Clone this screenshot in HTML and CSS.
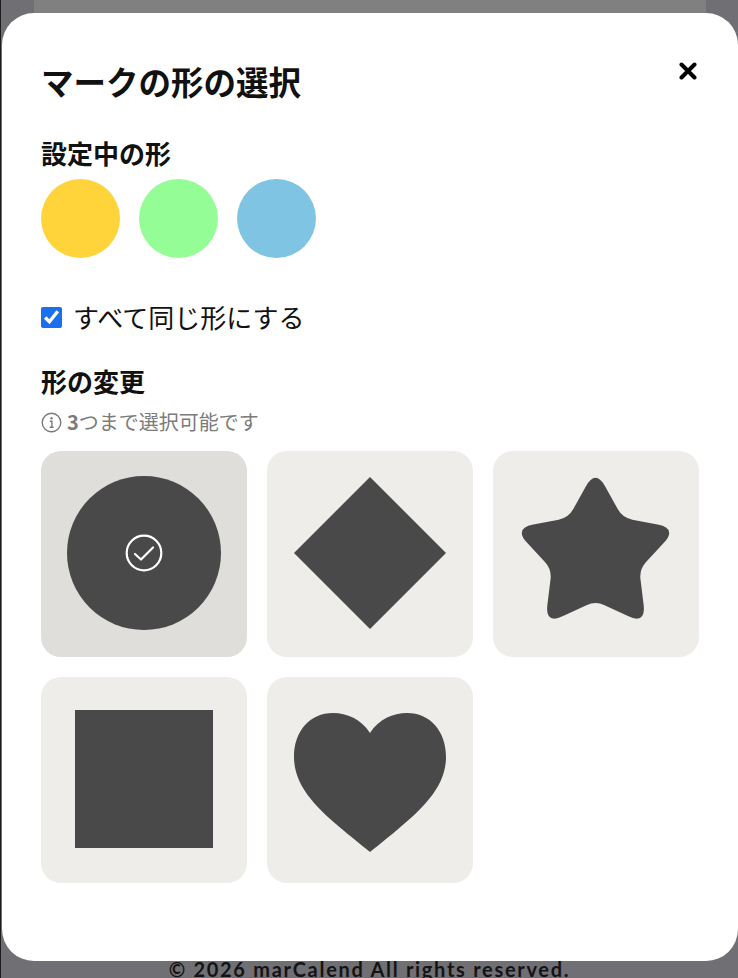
FILE: index.html
```html
<!DOCTYPE html>
<html lang="ja">
<head>
<meta charset="utf-8">
<title>マークの形の選択</title>
<link rel="stylesheet" href="styles.css">
</head>
<body>
<div class="screen">
  <div class="top-strip"><div class="behind"></div></div>
  <div class="modal">
    <div class="header">
      <h1 class="title">マークの形の選択</h1>
      <button class="close" aria-label="閉じる">
        <svg viewBox="0 0 18 18" width="18" height="18"><path d="M2.5 2.5 L15.5 15.5 M15.5 2.5 L2.5 15.5" stroke="#000" stroke-width="4" stroke-linecap="round"/></svg>
      </button>
    </div>

    <h2 class="section-title first">設定中の形</h2>
    <div class="current-shapes">
      <span class="dot dot-yellow"></span>
      <span class="dot dot-green"></span>
      <span class="dot dot-blue"></span>
    </div>

    <label class="same-row">
      <input type="checkbox" class="same-check" checked>
      <span class="same-label">すべて同じ形にする</span>
    </label>

    <h2 class="section-title second">形の変更</h2>
    <p class="info">
      <svg class="info-icon" viewBox="0 0 21 21" width="21" height="21"><circle cx="10.5" cy="10.5" r="9.3" fill="none" stroke="#7b7b7b" stroke-width="1.4"/><circle cx="10.5" cy="6.3" r="1.2" fill="#7b7b7b"/><path d="M8.8 9.2 H10.9 V15.2 M8.6 15.2 H12.6" fill="none" stroke="#7b7b7b" stroke-width="1.4"/></svg>
      <b class="info-num">3</b>つまで選択可能です
    </p>

    <div class="shape-grid">
      <button class="tile selected">
        <svg viewBox="0 0 206 206" width="206" height="206">
          <circle cx="103" cy="102" r="77" fill="#494949"/>
          <circle cx="103" cy="102" r="17.3" fill="none" stroke="#fff" stroke-width="2.2"/>
          <path d="M94 103 L100 108.5 L112 96.5" fill="none" stroke="#fff" stroke-width="2.2" stroke-linecap="round" stroke-linejoin="round"/>
        </svg>
      </button>
      <button class="tile">
        <svg viewBox="0 0 206 206" width="206" height="206">
          <polygon points="103,26 179,102 103,178 27,102" fill="#494949"/>
        </svg>
      </button>
      <button class="tile">
        <svg viewBox="0 0 206 206" width="206" height="206">
          <path d="M112.2 35.49 L124.69 58.04 Q129.54 66.79 139.36 68.7 L164.66 73.61 Q184.29 77.43 170.65 92.05 L153.07 110.9 Q146.25 118.21 147.47 128.14 L150.61 153.72 Q153.05 173.57 134.92 165.12 L111.56 154.23 Q102.5 150 93.44 154.23 L70.08 165.12 Q51.95 173.57 54.39 153.72 L57.53 128.14 Q58.75 118.21 51.93 110.9 L34.35 92.05 Q20.71 77.43 40.34 73.61 L65.64 68.7 Q75.46 66.79 80.31 58.04 L92.8 35.49 Q102.5 18 112.2 35.49 Z" fill="#494949"/>
        </svg>
      </button>
      <button class="tile">
        <svg viewBox="0 0 206 206" width="206" height="206">
          <rect x="34" y="33" width="138" height="138" fill="#494949"/>
        </svg>
      </button>
      <button class="tile">
        <svg viewBox="0 0 206 206" width="206" height="206">
          <path d="M103 56 C112 42 126 36 140 36 C163 36 179 54 179 80 C179 110 155 132 130 153 C118 163 108 171 103 175 C98 171 88 163 76 153 C51 132 27 110 27 80 C27 54 43 36 66 36 C80 36 94 42 103 56 Z" fill="#494949"/>
        </svg>
      </button>
    </div>
  </div>
  <footer class="footer">© 2026 marCalend All rights reserved.</footer>
</div>
</body>
</html>
```

FILE: styles.css
```css
html, body {
  margin: 0;
  padding: 0;
}

body {
  background: #706f74;
  font-family: "Noto Sans CJK JP", "Noto Sans", sans-serif;
  color: #111;
}

.screen {
  width: 738px;
  height: 978px;
  overflow: hidden;
  box-sizing: border-box;
  border-left: 1px solid #1c1c1e;
  background: #706f74;
}

.top-strip {
  height: 13px;
  padding: 0 32px 0 33px;
}

.behind {
  height: 100%;
  background: #808080;
}

.modal {
  margin-left: 1px;
  width: 736px;
  height: 948px;
  box-sizing: border-box;
  background: #fff;
  border-radius: 32px;
  padding: 48px 39px 0 39px;
}

.header {
  display: flex;
  justify-content: space-between;
  align-items: flex-start;
}

.title {
  margin: 0;
  font-size: 32.5px;
  line-height: 40px;
  font-weight: 700;
  color: #111;
}

.close {
  width: 18px;
  height: 18px;
  margin: 1px 2px 0 0;
  padding: 0;
  border: 0;
  background: none;
  display: block;
}

.close svg {
  display: block;
}

.section-title {
  margin: 0;
  font-size: 26px;
  line-height: 34px;
  font-weight: 700;
  color: #111;
}

.section-title.first {
  margin-top: 35px;
}

.section-title.second {
  margin-top: 30px;
}

.current-shapes {
  display: flex;
  gap: 19px;
  margin-top: 9px;
}

.dot {
  width: 79px;
  height: 79px;
  border-radius: 50%;
  display: block;
}

.dot-yellow { background: #ffd43b; }
.dot-green { background: #95fd96; }
.dot-blue { background: #7fc5e3; }

.same-row {
  display: flex;
  align-items: center;
  height: 34px;
  margin-top: 42px;
}

.same-check {
  width: 21px;
  height: 21px;
  margin: 0 11px 0 0;
  accent-color: #1a6fef;
}

.same-label {
  font-size: 26px;
  line-height: 34px;
  font-weight: 400;
  color: #111;
}

.info {
  margin: 11px 0 0;
  display: flex;
  align-items: center;
  font-size: 20px;
  line-height: 26px;
  color: #7b7b7b;
}

.info-icon {
  display: block;
  margin-right: 5px;
}

.info-num {
  font-weight: 700;
}

.shape-grid {
  margin-top: 16px;
  display: grid;
  grid-template-columns: repeat(3, 206px);
  grid-auto-rows: 206px;
  gap: 20px;
}

.tile {
  width: 206px;
  height: 206px;
  padding: 0;
  border: 0;
  border-radius: 20px;
  background: #eeede9;
  display: block;
}

.tile svg {
  display: block;
}

.tile.selected {
  background: #dfdedb;
}

.footer {
  text-align: center;
  font-family: "Lato", "Liberation Sans", sans-serif;
  font-weight: 700;
  font-size: 20px;
  line-height: 16px;
  letter-spacing: 1.7px;
  color: #141414;
}
```
